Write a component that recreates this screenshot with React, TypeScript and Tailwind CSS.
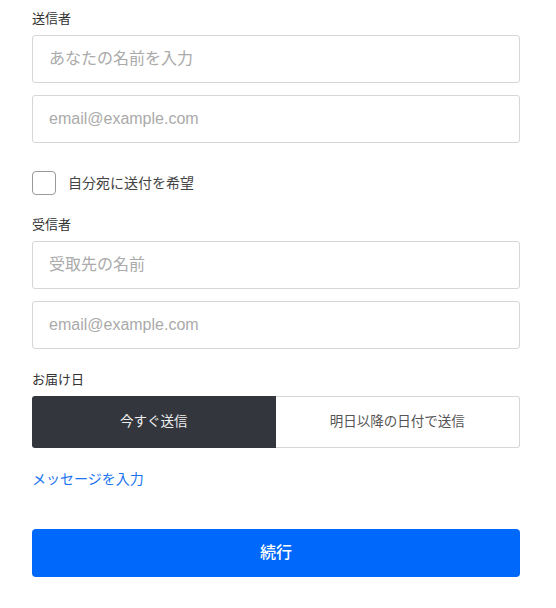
import React from "react";

const font = { fontFamily: '"Liberation Sans", "Noto Sans CJK JP", sans-serif' };

function Label({ children, className = "" }: { children: React.ReactNode; className?: string }) {
  return <div className={`h-5 text-[13px] leading-5 text-[#333] mb-1.5 ${className}`}>{children}</div>;
}

function Input({ placeholder }: { placeholder: string }) {
  return (
    <input
      placeholder={placeholder}
      className="block w-full h-12 rounded-[3px] border border-[#d5d6d9] bg-white px-4 text-[16px] text-[#333] placeholder:text-[#aaaaaa] outline-none"
      style={font}
    />
  );
}

export default function App() {
  return (
    <div className="bg-white w-[556px] h-[608px] pl-8 pr-9 pt-[9px]" style={font}>
      <Label>送信者</Label>
      <Input placeholder="あなたの名前を入力" />
      <div className="mt-3">
        <Input placeholder="email@example.com" />
      </div>
      <label className="mt-7 flex items-center h-6">
        <span className="w-6 h-6 rounded-[4px] border border-[#9a9a9a] bg-white" />
        <span className="ml-3 text-[14px] text-[#444]">自分宛に送付を希望</span>
      </label>
      <Label className="mt-5">受信者</Label>
      <Input placeholder="受取先の名前" />
      <div className="mt-3">
        <Input placeholder="email@example.com" />
      </div>
      <Label className="mt-[21px]">お届け日</Label>
      <div className="flex h-[52px]">
        <button className="flex-1 rounded-l-[3px] bg-[#33363d] text-[#eeeeee] text-[13.5px]">今すぐ送信</button>
        <button className="flex-1 rounded-r-[3px] border border-l-0 border-[#d5d6d9] bg-white text-[#555] text-[13.5px]">
          明日以降の日付で送信
        </button>
      </div>
      <div className="mt-[21px] h-5 text-[14px] leading-5 text-[#1a73f0]">メッセージを入力</div>
      <button className="mt-10 block w-full h-12 rounded-[4px] bg-[#0068fa] text-white text-[16px] font-medium">
        続行
      </button>
    </div>
  );
}
